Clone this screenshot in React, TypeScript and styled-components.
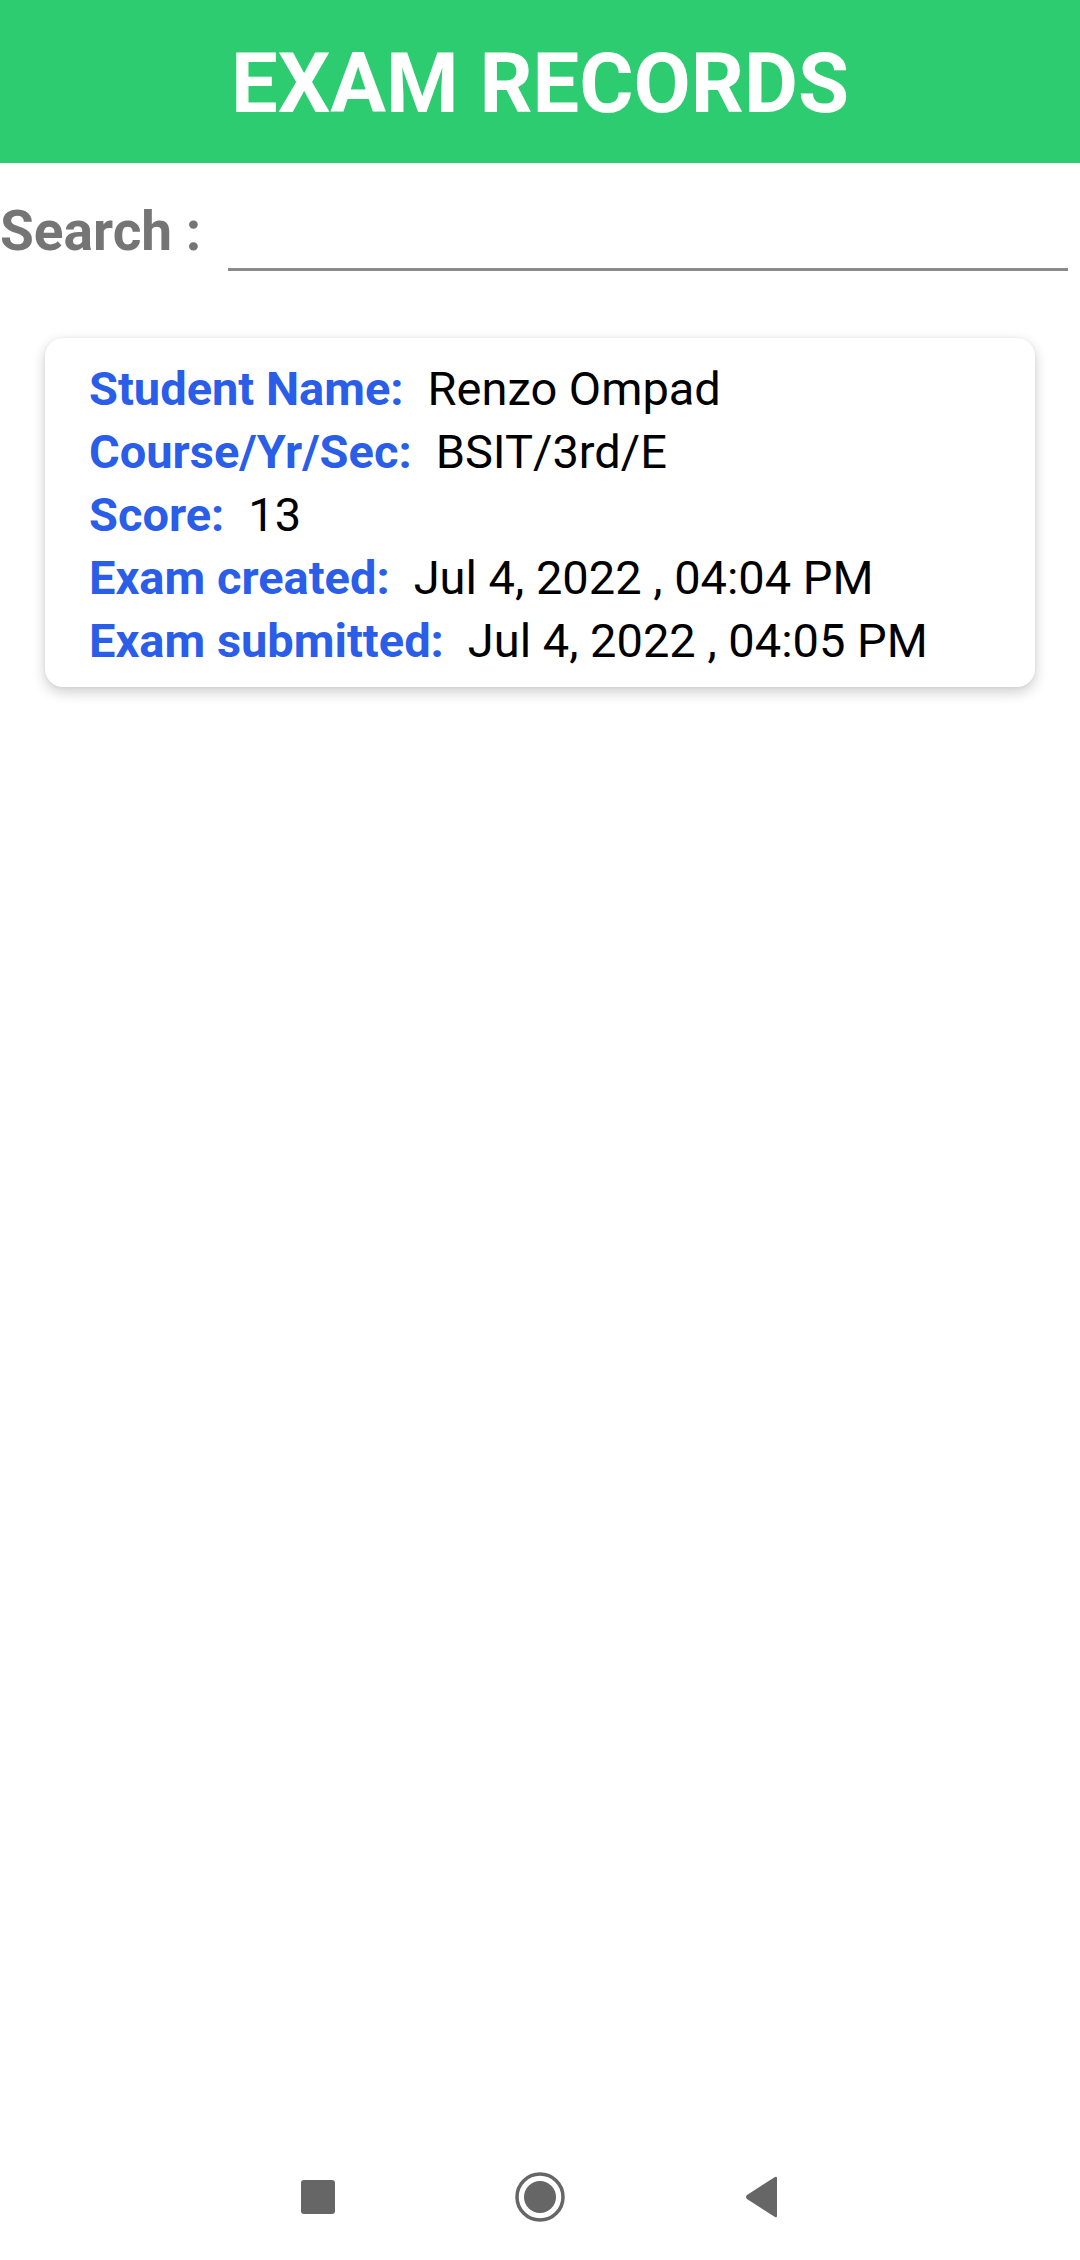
import React from "react";
import styled, { createGlobalStyle } from "styled-components";

const GlobalStyle = createGlobalStyle`
  html, body {
    margin: 0;
    padding: 0;
    background: #ffffff;
  }
  body {
    font-family: Roboto, "Noto Sans", "Liberation Sans", sans-serif;
  }
  * { box-sizing: border-box; }
`;

const Page = styled.div`
  width: 1080px;
  min-height: 2260px;
  display: flex;
  flex-direction: column;
  background: #ffffff;
`;

const Header = styled.header`
  height: 163px;
  background: #2ecc71;
  display: flex;
  justify-content: center;
  padding-top: 36px;
`;

const Title = styled.h1`
  margin: 0;
  color: #ffffff;
  font-family: Roboto, sans-serif;
  font-weight: 700;
  font-size: 83px;
  line-height: 96px;
  letter-spacing: 0;
`;

const SearchRow = styled.div`
  margin-top: 36px;
  display: flex;
  align-items: flex-start;
  padding-right: 12px;
`;

const SearchLabel = styled.label`
  font-family: Roboto, sans-serif;
  font-weight: 700;
  font-size: 55px;
  line-height: 64px;
  color: #757575;
  width: 228px;
  flex: none;
`;

const SearchInput = styled.input`
  flex: 1;
  height: 72px;
  border: none;
  border-bottom: 3px solid #8a8a8a;
  outline: none;
  background: transparent;
  font-family: Roboto, sans-serif;
  font-size: 47px;
  padding: 0 8px;
`;

const Card = styled.section`
  margin: 67px 45px 0;
  background: #ffffff;
  border-radius: 18px;
  box-shadow: 0 5px 14px rgba(0, 0, 0, 0.2), 0 0 3px rgba(0, 0, 0, 0.06);
  padding: 19px 44px 15px;
  display: flex;
  flex-direction: column;
`;

const Row = styled.div`
  display: flex;
  gap: 24px;
  font-family: Roboto, sans-serif;
  font-size: 47px;
  line-height: 63px;
  white-space: nowrap;
`;

const Label = styled.span`
  color: #2a5de8;
  font-weight: 700;
`;

const Value = styled.span`
  color: #000000;
  font-weight: 400;
`;

const NavBar = styled.nav`
  margin-top: auto;
  height: 126px;
  display: flex;
  align-items: center;
  justify-content: center;
`;

const NavSlot = styled.div`
  width: 222px;
  display: flex;
  justify-content: center;
  align-items: center;
`;

const records = [
  { label: "Student Name:", value: "Renzo Ompad" },
  { label: "Course/Yr/Sec:", value: "BSIT/3rd/E" },
  { label: "Score:", value: "13" },
  { label: "Exam created:", value: "Jul 4, 2022 , 04:04 PM" },
  { label: "Exam submitted:", value: "Jul 4, 2022 , 04:05 PM" },
];

export default function App() {
  return (
    <>
      <GlobalStyle />
      <Page>
        <Header>
          <Title>EXAM RECORDS</Title>
        </Header>
        <SearchRow>
          <SearchLabel htmlFor="search">Search :</SearchLabel>
          <SearchInput id="search" type="text" />
        </SearchRow>
        <Card>
          {records.map((r) => (
            <Row key={r.label}>
              <Label>{r.label}</Label>
              <Value>{r.value}</Value>
            </Row>
          ))}
        </Card>
        <NavBar>
          <NavSlot>
            <svg width="36" height="36" viewBox="0 0 36 36">
              <rect x="1" y="1" width="34" height="34" rx="3" fill="#666666" />
            </svg>
          </NavSlot>
          <NavSlot>
            <svg width="52" height="52" viewBox="0 0 52 52">
              <circle cx="26" cy="26" r="23" fill="none" stroke="#666666" strokeWidth="3.5" />
              <circle cx="26" cy="26" r="16" fill="#666666" />
            </svg>
          </NavSlot>
          <NavSlot>
            <svg width="36" height="42" viewBox="0 0 36 42">
              <path d="M33 2 L33 40 Q33 42 31 41 L3 23 Q1 21 3 19 L31 1 Q33 0 33 2 Z" fill="#666666" />
            </svg>
          </NavSlot>
        </NavBar>
      </Page>
    </>
  );
}
